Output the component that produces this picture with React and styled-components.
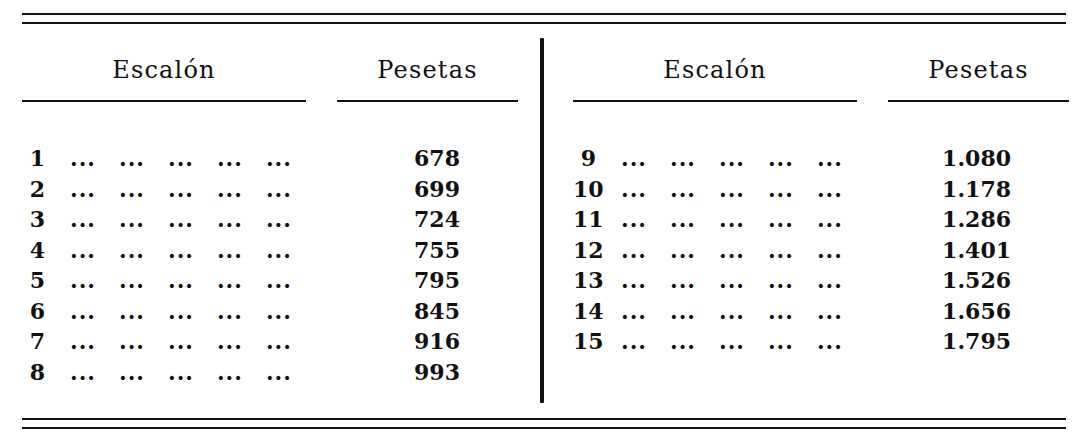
import styled, {createGlobalStyle} from 'styled-components'

const GlobalStyle = createGlobalStyle`
  html, body {
    margin: 0;
    background: #fff;
  }

  body {
    color: #111;
    font-family: "DejaVu Serif", "Liberation Serif", serif;
  }
`

const Page = styled.div`
  width: 1077px;
  height: 436px;
  box-sizing: border-box;
  padding: 13px 0 0 22px;
`

const DoubleRule = styled.div`
  width: 1044px;
  height: 7px;
  border-top: 2px solid #111;
  border-bottom: 2px solid #111;
`

const Body = styled.div`
  display: flex;
  height: 365px;
  margin: 14px 0 15px;
`

const Half = styled.div`
  display: flex;
  flex-direction: column;
  width: 496px;
  padding-top: 19px;
  margin-left: ${p => p.$offset || 0}px;
  margin-right: ${p => p.$trail || 0}px;
`

const Bar = styled.div`
  width: 4px;
  background: #111;
  border-radius: 1px;
`

const Grid = styled.div`
  display: grid;
  grid-template-columns: 284px 181px;
  column-gap: 31px;
`

const HeaderCell = styled.div`
  font-size: 24px;
  line-height: 26px;
  letter-spacing: 1.2px;
  text-align: center;
  padding-bottom: 17px;
  border-bottom: 2px solid #111;
`

const Rows = styled(Grid)`
  padding-top: 41px;
  font-size: 22px;
  font-weight: bold;
  line-height: 30.5px;
`

const Step = styled.div`
  display: flex;
  align-items: baseline;
`

const StepNumber = styled.span`
  width: 23px;
  text-align: right;
`

const Leaders = styled.span`
  display: flex;
  gap: 23px;
  margin-left: 25px;
`

const Dots = styled.span`
  letter-spacing: 1px;
`

const Amount = styled.div`
  text-align: right;
  padding-right: 58px;
`

const left = [
  ['1', '678'], ['2', '699'], ['3', '724'], ['4', '755'],
  ['5', '795'], ['6', '845'], ['7', '916'], ['8', '993'],
]

const right = [
  ['9', '1.080'], ['10', '1.178'], ['11', '1.286'], ['12', '1.401'],
  ['13', '1.526'], ['14', '1.656'], ['15', '1.795'],
]

const Column = ({rows, offset, trail}) => <Half $offset={offset} $trail={trail}>
  <Grid>
    <HeaderCell>Escalón</HeaderCell>
    <HeaderCell>Pesetas</HeaderCell>
  </Grid>
  <Rows>
    {rows.map(([step, amount]) => [
      <Step key={`s${step}`}>
        <StepNumber>{step}</StepNumber>
        <Leaders>
          {[0, 1, 2, 3, 4].map(i => <Dots key={i}>...</Dots>)}
        </Leaders>
      </Step>,
      <Amount key={`a${step}`}>{amount}</Amount>,
    ])}
  </Rows>
</Half>

export default function App() {
  return <>
    <GlobalStyle/>
    <Page>
      <DoubleRule/>
      <Body>
        <Column rows={left} trail={22}/>
        <Bar/>
        <Column rows={right} offset={29}/>
      </Body>
      <DoubleRule/>
    </Page>
  </>
}
